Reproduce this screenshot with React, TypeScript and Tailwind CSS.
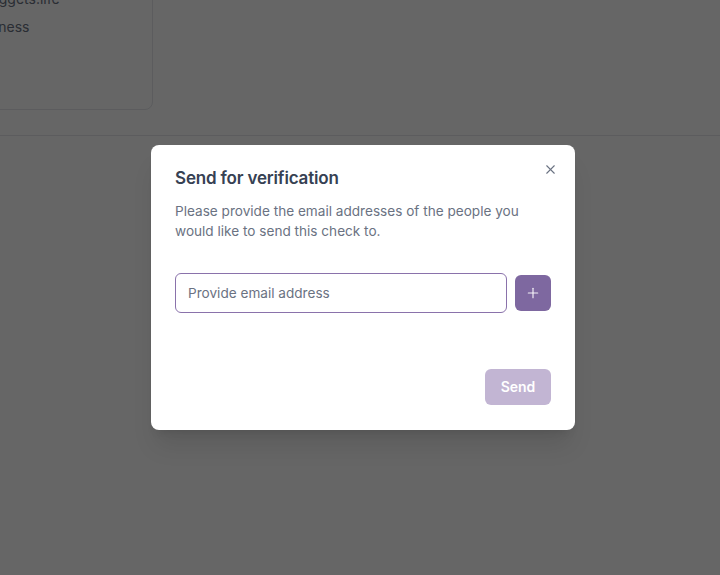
import { X, Plus } from 'lucide-react';

export default function App() {
  return (
    <div className="relative h-[575px] w-[720px] overflow-hidden bg-white font-['Inter','Noto_Sans',sans-serif]">
      {/* page behind the overlay */}
      <div className="border-b border-gray-200 pb-[25px]">
        <div className="-ml-[108px] -mt-[12px] h-[122px] w-[261px] rounded-lg border border-gray-200 pl-[64px] text-sm text-gray-500">
          <div className="leading-5">hi@nuggets.life</div>
          <div className="mt-2 leading-5">Awareness</div>
        </div>
      </div>

      {/* overlay */}
      <div className="absolute inset-0 flex justify-center bg-black/60 pl-[6px] pt-[145px]">
        <div className="relative h-[285px] w-[424px] rounded-lg bg-white px-6 pt-[19px] pb-6 shadow-xl">
          <button className="absolute right-[17px] top-4 flex h-4 w-4 items-center justify-center text-gray-500">
            <X size={15} strokeWidth={1.75} />
          </button>
          <h2 className="text-[17px] font-semibold leading-7 tracking-[-0.01em] text-gray-700">Send for verification</h2>
          <p className="mt-[9px] text-[13.6px] leading-5 text-gray-500">
            Please provide the email addresses of the people you would like to send this check to.
          </p>
          <div className="mt-[32px] flex items-center gap-2">
            <input
              autoFocus
              className="h-10 flex-1 rounded-md border border-[#8a72ab] px-3 text-[13.6px] text-gray-700 placeholder:text-gray-500 outline-none"
              placeholder="Provide email address"
            />
            <button className="flex h-9 w-9 items-center justify-center rounded-md bg-[#7e68a0] text-white/90">
              <Plus size={16} strokeWidth={1.75} />
            </button>
          </div>
          <div className="mt-14 flex justify-end">
            <button className="h-9 w-[66px] rounded-md bg-[#c2b5d3] text-sm font-semibold text-white">Send</button>
          </div>
        </div>
      </div>
    </div>
  );
}
